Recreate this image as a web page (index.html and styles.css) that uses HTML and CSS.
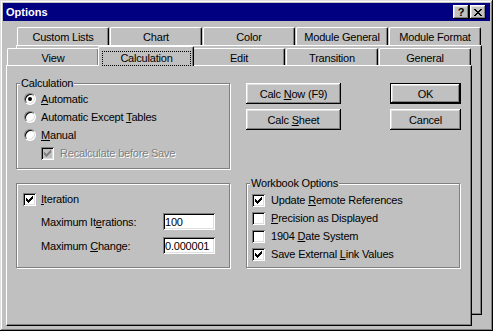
FILE: index.html
```html
<!DOCTYPE html>
<html lang="en">

<head>
    <meta charset="UTF-8">
    <title>Options</title>
    <link rel="stylesheet" href="styles.css">
</head>

<body>
    <div class="window">
        <div class="titlebar">
            <span class="title">Options</span>
            <div class="caption-btns">
                <span class="cap-btn help">?</span>
                <span class="cap-btn">
                    <svg width="8" height="7" viewBox="0 0 8 7">
                        <path d="M0 0h2v1h-2z M6 0h2v1h-2z M1 1h2v1h-2z M5 1h2v1h-2z M2 2h4v1h-4z M3 3h2v1h-2z M2 4h4v1h-4z M1 5h2v1h-2z M5 5h2v1h-2z M0 6h2v1h-2z M6 6h2v1h-2z" fill="#000" />
                    </svg>
                </span>
            </div>
        </div>

        <div class="tabs">
            <div class="back-sheet"></div>

            <!-- Tylny rząd zakładek -->
            <div class="tab-row back">
                <div class="tab">Custom Lists</div>
                <div class="tab">Chart</div>
                <div class="tab">Color</div>
                <div class="tab">Module General</div>
                <div class="tab">Module Format</div>
            </div>

            <!-- Przedni rząd zakładek -->
            <div class="tab-row front">
                <div class="tab">View</div>
                <div class="tab active"><span class="focus">Calculation</span></div>
                <div class="tab">Edit</div>
                <div class="tab">Transition</div>
                <div class="tab">General</div>
            </div>

            <div class="sheet">
                <div class="group calc">
                    <span class="legend">Calculation</span>
                    <div class="opt"><span class="radio on"></span><span><u>A</u>utomatic</span></div>
                    <div class="opt"><span class="radio"></span><span>Automatic Except <u>T</u>ables</span></div>
                    <div class="opt"><span class="radio"></span><span><u>M</u>anual</span></div>
                    <div class="opt sub disabled">
                        <span class="check">
                            <svg width="7" height="7" viewBox="0 0 7 7"><path d="M0 2h1v3h-1z M1 3h1v3h-1z M2 4h1v3h-1z M3 3h1v3h-1z M4 2h1v3h-1z M5 1h1v3h-1z M6 0h1v3h-1z" /></svg>
                        </span>
                        <span>Recalculate before Save</span>
                    </div>
                </div>

                <div class="btn-area">
                    <div class="btn-col">
                        <button class="btn">Calc <u>N</u>ow (F9)</button>
                        <button class="btn">Calc <u>S</u>heet</button>
                    </div>
                    <div class="btn-col">
                        <button class="btn narrow default">OK</button>
                        <button class="btn narrow">Cancel</button>
                    </div>
                </div>

                <div class="group iter">
                    <div class="opt">
                        <span class="check">
                            <svg width="7" height="7" viewBox="0 0 7 7"><path d="M0 2h1v3h-1z M1 3h1v3h-1z M2 4h1v3h-1z M3 3h1v3h-1z M4 2h1v3h-1z M5 1h1v3h-1z M6 0h1v3h-1z" /></svg>
                        </span>
                        <span><u>I</u>teration</span>
                    </div>
                    <div class="field first">
                        <span class="label">Maximum It<u>e</u>rations:</span>
                        <input class="input" type="text" value="100">
                    </div>
                    <div class="field">
                        <span class="label">Maximum <u>C</u>hange:</span>
                        <input class="input" type="text" value="0.000001">
                    </div>
                </div>

                <div class="group book">
                    <span class="legend">Workbook Options</span>
                    <div class="opt">
                        <span class="check">
                            <svg width="7" height="7" viewBox="0 0 7 7"><path d="M0 2h1v3h-1z M1 3h1v3h-1z M2 4h1v3h-1z M3 3h1v3h-1z M4 2h1v3h-1z M5 1h1v3h-1z M6 0h1v3h-1z" /></svg>
                        </span>
                        <span>Update <u>R</u>emote References</span>
                    </div>
                    <div class="opt"><span class="check"></span><span><u>P</u>recision as Displayed</span></div>
                    <div class="opt"><span class="check"></span><span>1904 <u>D</u>ate System</span></div>
                    <div class="opt">
                        <span class="check">
                            <svg width="7" height="7" viewBox="0 0 7 7"><path d="M0 2h1v3h-1z M1 3h1v3h-1z M2 4h1v3h-1z M3 3h1v3h-1z M4 2h1v3h-1z M5 1h1v3h-1z M6 0h1v3h-1z" /></svg>
                        </span>
                        <span>Save External <u>L</u>ink Values</span>
                    </div>
                </div>
            </div>
        </div>
    </div>
</body>

</html>
```

FILE: styles.css
```css
body {
    margin: 0;
    font-family: "Liberation Sans", Arial, sans-serif;
    font-size: 11px;
    letter-spacing: -0.2px;
    color: #000;
    background: #c0c0c0;
}

.window {
    width: 493px;
    height: 331px;
    box-sizing: border-box;
    padding: 3px;
    background: #c0c0c0;
    box-shadow: inset -1px -1px 0 #000, inset 1px 1px 0 #dfdfdf,
        inset -2px -2px 0 #808080, inset 2px 2px 0 #fff;
}

.titlebar {
    height: 18px;
    background: #000080;
    display: flex;
    align-items: center;
    justify-content: space-between;
    padding: 0 4px 0 3px;
}

.title {
    color: #fff;
    font-weight: bold;
    font-size: 11px;
    letter-spacing: 0;
}

.caption-btns {
    display: flex;
    gap: 1px;
}

.cap-btn {
    width: 16px;
    height: 14px;
    box-sizing: border-box;
    background: #c0c0c0;
    display: flex;
    align-items: center;
    justify-content: center;
    box-shadow: inset -1px -1px 0 #000, inset 1px 1px 0 #fff,
        inset -2px -2px 0 #808080, inset 2px 2px 0 #dfdfdf;
}

.cap-btn.help {
    font-weight: bold;
    font-size: 11px;
    line-height: 14px;
}

.tabs {
    position: relative;
    z-index: 0;
    margin: 6px 0 0 3px;
}

.back-sheet {
    position: absolute;
    left: 10px;
    top: 18px;
    width: 466px;
    height: 270px;
    box-sizing: border-box;
    z-index: -1;
    background: #c0c0c0;
    border-top: 1px solid #fff;
    border-left: 1px solid #fff;
    border-right: 1px solid #000;
    border-bottom: 1px solid #000;
    box-shadow: inset -1px -1px 0 #808080;
}

.tab-row {
    display: flex;
}

.tab-row.back {
    margin-left: 11px;
    height: 18px;
}

.tab-row.front {
    margin-left: 1px;
    height: 20px;
    align-items: flex-end;
}

.tab {
    width: 92px;
    height: 18px;
    margin-right: 1px;
    box-sizing: border-box;
    background: #c0c0c0;
    border-top: 1px solid #fff;
    border-left: 1px solid #fff;
    border-right: 1px solid #000;
    box-shadow: inset -1px 0 0 #808080;
    border-radius: 2px 2px 0 0;
    text-align: center;
    padding-top: 3px;
    line-height: 13px;
}

.front .tab {
    height: 17px;
}

.front .tab.active {
    width: 96px;
    height: 20px;
    margin: 0 -1px -1px -2px;
    padding-top: 4px;
    position: relative;
}

.focus {
    display: block;
    margin: 0 2px 0 3px;
    border: 1px dotted #000;
    line-height: 13px;
}

.sheet {
    width: 466px;
    height: 261px;
    box-sizing: border-box;
    background: #c0c0c0;
    border-top: 1px solid #fff;
    border-left: 1px solid #fff;
    border-right: 1px solid #000;
    border-bottom: 1px solid #000;
    box-shadow: inset -1px -1px 0 #808080;
    padding: 17px 0 0 9px;
    display: grid;
    grid-template-columns: 214px 214px;
    column-gap: 16px;
    row-gap: 14px;
    align-content: start;
}

.group {
    position: relative;
    border: 1px solid #808080;
    box-shadow: inset 1px 1px 0 #fff, 1px 1px 0 #fff;
}

.legend {
    position: absolute;
    top: -7px;
    left: 3px;
    padding: 0 1px;
    line-height: 13px;
    background: #c0c0c0;
}

.calc {
    padding: 6px 0 6px 7px;
}

.iter {
    padding: 6px 0 13px 6px;
}

.book {
    padding: 7px 0 4px 5px;
}

.opt {
    display: flex;
    align-items: center;
    height: 18px;
    gap: 5px;
}

.book .opt,
.opt.sub {
    gap: 6px;
}

.opt.sub {
    margin-left: 17px;
}

.disabled {
    color: #808080;
    text-shadow: 1px 1px 0 #fff;
}

.radio {
    width: 12px;
    height: 12px;
    box-sizing: border-box;
    border-radius: 50%;
    border: 1px solid;
    border-color: #808080 #fff #fff #808080;
    background: #fff;
    box-shadow: inset 1px 1px 0 #000, inset -1px -1px 0 #dfdfdf;
    position: relative;
    flex: none;
}

.radio.on::after {
    content: "";
    position: absolute;
    left: 3px;
    top: 3px;
    width: 4px;
    height: 4px;
    border-radius: 50%;
    background: #000;
}

.check {
    width: 13px;
    height: 13px;
    box-sizing: border-box;
    background: #fff;
    flex: none;
    display: flex;
    align-items: center;
    justify-content: center;
    box-shadow: inset 1px 1px 0 #808080, inset -1px -1px 0 #fff,
        inset 2px 2px 0 #000, inset -2px -2px 0 #dfdfdf;
}

.check svg {
    fill: #000;
    shape-rendering: crispEdges;
}

.disabled .check {
    background: #c0c0c0;
}

.disabled .check svg {
    fill: #808080;
}

.btn-area {
    display: flex;
    gap: 49px;
}

.btn-col {
    display: flex;
    flex-direction: column;
    gap: 5px;
}

.btn {
    width: 95px;
    height: 21px;
    box-sizing: border-box;
    padding: 0;
    border: none;
    font: inherit;
    letter-spacing: inherit;
    color: #000;
    background: #c0c0c0;
    text-align: center;
    box-shadow: inset -1px -1px 0 #000, inset 1px 1px 0 #fff,
        inset -2px -2px 0 #808080, inset 2px 2px 0 #dfdfdf;
}

.btn.narrow {
    width: 71px;
}

.btn.default {
    border: 1px solid #000;
}

.field {
    display: flex;
    align-items: center;
    margin: 7px 0 0 18px;
}

.field.first {
    margin-top: 5px;
}

.label {
    width: 122px;
}

.input {
    width: 52px;
    height: 17px;
    box-sizing: border-box;
    border: none;
    padding: 0 2px;
    margin: 0;
    font: inherit;
    letter-spacing: inherit;
    color: #000;
    background: #fff;
    outline: none;
    box-shadow: inset 1px 1px 0 #808080, inset -1px -1px 0 #fff,
        inset 2px 2px 0 #000, inset -2px -2px 0 #dfdfdf;
}
```
